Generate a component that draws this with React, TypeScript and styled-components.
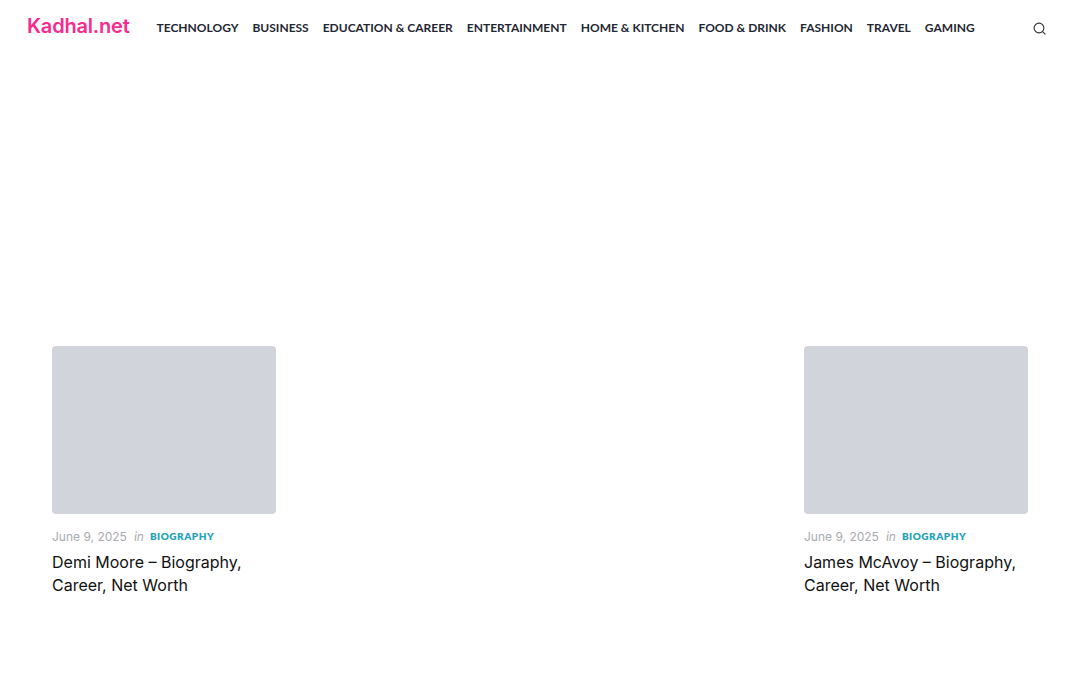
import React from 'react';
import styled, { createGlobalStyle } from 'styled-components';

const GlobalStyle = createGlobalStyle`
  html, body {
    margin: 0;
    padding: 0;
    background: #fff;
  }
  body {
    font-family: Inter, "Liberation Sans", sans-serif;
  }
`;

const Page = styled.div`
  width: 1080px;
  height: 675px;
  overflow: hidden;
`;

const Header = styled.header`
  display: flex;
  align-items: center;
  height: 56px;
  padding: 0 34px 0 27px;
`;

const Logo = styled.a`
  font-family: Inter, sans-serif;
  font-size: 20px;
  font-weight: 600;
  letter-spacing: -0.2px;
  color: #f72b8f;
  margin-right: 27px;
  position: relative;
  top: -2px;
`;

const Nav = styled.nav`
  display: flex;
  flex: 1;
  gap: 14px;
`;

const NavLink = styled.a`
  font-family: Lato, sans-serif;
  font-size: 12px;
  font-weight: 700;
  line-height: 16px;
  color: #1f2733;
  white-space: nowrap;
`;

const SearchButton = styled.button`
  display: flex;
  padding: 0;
  border: 0;
  background: none;
  color: #333;
`;

const Cards = styled.section`
  display: flex;
  justify-content: space-between;
  padding: 290px 52px 0;
`;

const Card = styled.article`
  width: 224px;
`;

const Thumb = styled.div`
  height: 168px;
  border-radius: 4px;
  background: #d1d5db;
`;

const Meta = styled.div`
  display: flex;
  align-items: center;
  margin-top: 14px;
  height: 16px;
  font-size: 12px;
  color: #a8abb0;
`;

const MetaIn = styled.em`
  margin: 0 6px 0 7px;
`;

const Category = styled.a`
  font-family: Lato, sans-serif;
  font-size: 10px;
  font-weight: 800;
  letter-spacing: 0.5px;
  color: #26a3b5;
`;

const Title = styled.h3`
  margin: 7px 0 0;
  font-size: 16px;
  font-weight: 400;
  line-height: 23px;
  color: #111;
`;

const menu = ['TECHNOLOGY', 'BUSINESS', 'EDUCATION & CAREER', 'ENTERTAINMENT', 'HOME & KITCHEN', 'FOOD & DRINK', 'FASHION', 'TRAVEL', 'GAMING'];

const posts = [
  { id: 1, first: 'Demi Moore – Biography,', second: 'Career, Net Worth' },
  { id: 2, first: 'James McAvoy – Biography,', second: 'Career, Net Worth' },
];

export default function App() {
  return (
    <Page>
      <GlobalStyle />
      <Header>
        <Logo>Kadhal.net</Logo>
        <Nav>
          {menu.map((item) => (
            <NavLink key={item}>{item}</NavLink>
          ))}
        </Nav>
        <SearchButton aria-label="Search">
          <svg width="13" height="13" viewBox="0 0 13 13" fill="none" stroke="currentColor" strokeWidth="1.1">
            <circle cx="6" cy="6" r="4.9" />
            <path d="M9.6 9.6 12.4 12.4" />
          </svg>
        </SearchButton>
      </Header>
      <Cards>
        {posts.map((post) => (
          <Card key={post.id}>
            <Thumb />
            <Meta>
              June 9, 2025
              <MetaIn>in</MetaIn>
              <Category>BIOGRAPHY</Category>
            </Meta>
            <Title>
              {post.first}
              <br />
              {post.second}
            </Title>
          </Card>
        ))}
      </Cards>
    </Page>
  );
}
